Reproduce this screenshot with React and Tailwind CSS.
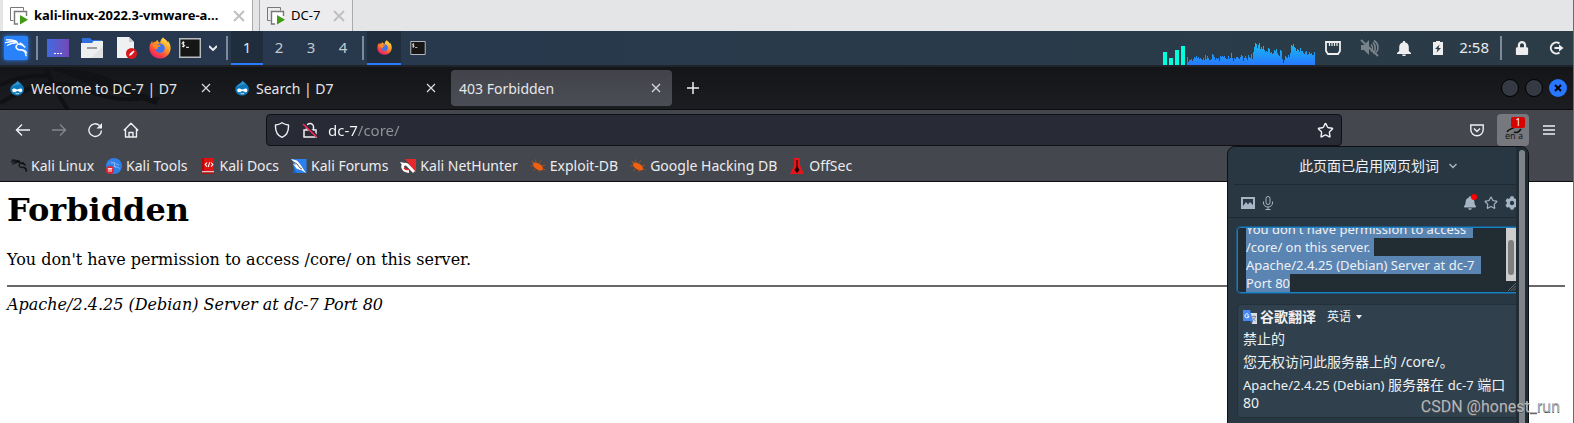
import { useEffect, useRef } from "react";
import { SiKalilinux } from "react-icons/si";
import { FaBell, FaCog, FaLock } from "react-icons/fa";
import { Star } from "lucide-react";

const SELECTED_TEXT =
  "Forbidden\nYou don't have permission to access /core/ on this server.\nApache/2.4.25 (Debian) Server at dc-7 Port 80";

// one value per pixel column of the cpu graph
const CPU_LOAD = [
  8, 3, 5, 5, 6, 4, 6, 8, 7, 9, 7, 8, 6, 7, 6, 5, 7, 5, 10, 6, 9, 7, 5, 5, 6, 11, 10, 8, 5, 7, 6, 7,
  4, 9, 8, 9, 8, 9, 7, 6, 6, 9, 6, 7, 12, 7, 4, 7, 6, 8, 8, 7, 6, 8, 10, 9, 4, 7, 9, 7, 5, 10, 8, 7,
  11, 6, 13, 18, 22, 21, 17, 20, 22, 16, 18, 16, 19, 15, 13, 14, 13, 17, 16, 12, 13, 11, 12, 15, 14, 16,
  12, 10, 9, 15, 14, 6, 2, 5, 9, 8, 7, 10, 8, 12, 20, 19, 21, 18, 17, 14, 16, 15, 13, 17, 14, 14, 12,
  11, 13, 14, 10, 11, 13, 11, 12, 10, 10, 13,
];

const bookmarks = [
  ["Kali Linux", KaliMark],
  ["Kali Tools", ToolsMark],
  ["Kali Docs", DocsMark],
  ["Kali Forums", ForumsMark],
  ["Kali NetHunter", NetHunterMark],
  ["Exploit-DB", BugMark],
  ["Google Hacking DB", BugMark],
  ["OffSec", OffSecMark],
];

function KaliMark() {
  return <SiKalilinux className="size-4 stroke-[#0c0d0f] stroke-1 text-[#0c0d0f]" />;
}

function ToolsMark() {
  return (
    <span className="relative flex size-4 items-center justify-center rounded-full bg-[#2f7fe8]">
      <SiKalilinux className="size-3 text-white" />
      <svg viewBox="0 0 8 8" className="absolute bottom-0 left-0 size-2">
        <circle cx="4" cy="4" r="4" fill="#e3262b" />
        <path d="M1.8 2.7h4.4M3 2.700v3.200M5 2.700v3.200" stroke="#fff" strokeWidth="1" />
      </svg>
    </span>
  );
}

function DocsMark() {
  return (
    <svg viewBox="0 0 16 16" className="size-4">
      <path d="M2 0h12v13H2z" fill="#e01212" />
      <path d="M2 0h2v13H2z" fill="#a80c0c" />
      <path d="M2 13h12v1.500H2z" fill="#d9c9c9" />
      <path d="M2 14.500h12V16H2z" fill="#b40e0e" />
      <path d="M7 4.500 5.200 6.600 7 8.600M11 4.500l1.800 2L11 8.600M9.800 4.200 8.200 9" stroke="#fff" strokeWidth="1.100" fill="none" />
    </svg>
  );
}

function ForumsMark() {
  return (
    <svg viewBox="0 0 16 16" className="size-4">
      <path d="M1 1h14.500v14H4z" fill="#2a80ee" />
      <path d="M0 1 6 2.500 9 6l2 3 4 6-5-3-4-1-4-5 3 1z" fill="#fff" />
      <path d="M1 3l5 3 3 4 2 1" stroke="#222" strokeWidth=".7" fill="none" />
      <path d="m3 10 3 5H2z" fill="#1767cf" />
    </svg>
  );
}

function NetHunterMark() {
  return (
    <svg viewBox="0 0 16 16" className="size-4">
      <path d="M5 1h11v14z" fill="#e6282c" />
      <path d="M14 14 8 7.500C5.500 4.500 1.500 7 3 10c1 2.500 3.500 3.500 6 3.500" stroke="#fff" strokeWidth="2.800" fill="none" />
      <path d="M4 10c1.500 2 3 2 5 1.500" stroke="#e6282c" strokeWidth="1.300" fill="none" />
      <path d="m0 4 5 1-3 2z" fill="#fff" />
    </svg>
  );
}

function BugMark() {
  return (
    <svg viewBox="0 0 16 16" className="size-4">
      <g stroke="#b5521c" strokeWidth=".8" fill="none">
        <path d="M4 5 1.500 3M6 4 5.500 1.500M9 5l2-2.500M3 8H.5M5 11l-1.500 2M9 12v2M12 8l3-1M13 11l2.500 1M4 4 2 5" />
      </g>
      <ellipse cx="8" cy="8.500" rx="5.600" ry="3" transform="rotate(32 8 8.500)" fill="#f0600f" />
    </svg>
  );
}

function OffSecMark() {
  return (
    <svg viewBox="0 0 16 16" className="size-4">
      <path d="M5 0h6v7l4 9H1l4-9z" fill="#e3161b" />
      <path d="M8 2v9" stroke="#5a0709" strokeWidth="1.500" />
      <path d="m8 8 2.500 4L8 15l-2.500-3z" fill="#1d0607" />
    </svg>
  );
}

function DrupalMark() {
  return (
    <svg viewBox="0 0 16 16" className="size-4 shrink-0">
      <path d="M8.500.5c.6 1.700 2 2.200 3.400 3.300 1.900 1.400 3 3.200 3 5.400 0 3.700-3 6.300-6.800 6.300S1.300 12.700 1.300 9.200c0-3.500 2.700-4.700 4.500-5.800C7.200 2.600 8.300 1.800 8.500.5z" fill="#0d77b8" />
      <path d="M8.500.5c.6 1.700 2 2.200 3.400 3.300C9.500 5 5.500 5 3 7c.6-2 2-2.900 3.200-3.600C7.300 2.700 8.300 1.800 8.500.5z" fill="#2f93cf" />
      <path d="M4.500 8.600c1.700-.6 3 .9 3.900.9 1 0 2.300-1.300 3.700-.9 1.700.5 1.500 3.400 0 3.600-1.400.2-2.300-1.200-3.600-1.200-1.200 0-2.200 1.500-3.700 1.300C2.700 12 2.800 9.200 4.500 8.600z" fill="#fff" />
      <path d="M6.500 13.200c1.200.8 2.600.8 3.800 0" stroke="#fff" strokeWidth=".9" fill="none" />
    </svg>
  );
}

function FirefoxMark({ className }) {
  return (
    <svg viewBox="0 0 24 24" className={className}>
      <defs>
        <linearGradient id="fox" x1=".85" y1="0" x2=".2" y2="1">
          <stop offset="0" stopColor="#fff14f" />
          <stop offset=".4" stopColor="#ff9a2a" />
          <stop offset=".75" stopColor="#fb4040" />
          <stop offset="1" stopColor="#e31580" />
        </linearGradient>
      </defs>
      <path d="M15.500.5c1.500 2 4 3 5.400 5.600.1-.8-.1-1.500-.3-2.100 2 2.300 3 5.200 3 8.300 0 6.300-5.200 11.200-11.600 11.200S.5 18.500.5 12.300C.5 8.700 2 6.200 3.600 4.300c0 1 .2 1.700.5 2.300C5 5.500 6.300 5 7.300 5.100 8.500 3.800 9 3.300 9.200 3c.3 1.700 1.400 3 3 3.300C12.300 4 13.500 1.700 15.500.5z" fill="url(#fox)" />
      <circle cx="12" cy="12.200" r="5.200" fill="#3f73ee" />
      <path d="M4.500 8.500C7 7.500 9.500 8.500 13 9c-.5 1.200-2 1.500-3 1.900-.7.300-.5 1.600-.9 2.700-2.500-.6-4.200-2.500-4.600-5.100z" fill="#ff8b1f" />
    </svg>
  );
}

function TerminalMark({ className }) {
  return (
    <svg viewBox="0 0 22 20" className={className}>
      <path d="M.7.7h20.600v18.600H.7z" fill="#161616" stroke="#b9bcbe" strokeWidth="1.400" />
      <path d="M5.500 4.500C4.500 4 3 4.300 3 5.300c0 1.300 2.700.8 2.700 2.200C5.700 8.700 4 8.800 3 8.200M4.300 3.300v6M7 9.300h3" stroke="#fff" fill="none" />
    </svg>
  );
}

function VmTab({ label, active }) {
  return (
    <div className={`flex items-center border-r border-[#a9abad] pr-[7px] pl-[7px] ${active ? "w-[250px] bg-white font-bold" : "ml-[6px] w-[94px] border-l bg-[#ececee] pl-[5px]"}`}>
      <svg viewBox="0 0 18 18" className="size-[18px] shrink-0">
        <path d="M3.500 13.500h-3V.5h13v3" fill="none" stroke="#777" />
        <path d="M8 17H4.500V4.500h12V9" fill="#fff" stroke="#777" strokeWidth="1.400" />
        <path d="m10 8 8 4.700L10 17.500z" fill="#3f9c12" />
      </svg>
      <button className="ml-1.5 text-[13px] whitespace-nowrap text-black">{label}</button>
      <button aria-label={`Close ${label}`} className="ml-auto">
        <svg viewBox="0 0 12 12" className="size-3 stroke-[#c0c0c0] stroke-2">
          <path d="m1 1 10 10M11 1 1 11" />
        </svg>
      </button>
    </div>
  );
}

function Divider({ className }) {
  return <span className={`h-6 w-0.5 shrink-0 bg-[#7f8a99] ${className}`} />;
}

function CpuGraph() {
  return (
    <div className="flex h-full items-end gap-0.5">
      <div className="flex items-end gap-0.5">
        <i className="h-[13px] w-1 bg-[#0fd]" />
        <i className="h-[7px] w-1 bg-[#0fd]" />
        <i className="h-[15px] w-1 bg-[#0fd]" />
        <i className="h-[19px] w-1 bg-[#0fd]" />
      </div>
      <svg viewBox="0 0 128 24" className="h-6 w-32" shapeRendering="crispEdges">
        <defs>
          <linearGradient id="load" x1="0" y1="0" x2="0" y2="24" gradientUnits="userSpaceOnUse">
            <stop offset="0" stopColor="#13c4ee" />
            <stop offset="1" stopColor="#2878ff" />
          </linearGradient>
        </defs>
        <path fill="url(#load)" d={"M0 24" + CPU_LOAD.map((v, i) => `V${24 - v}H${i + 1}`).join("") + "V24z"} />
      </svg>
    </div>
  );
}

function DesktopPanel() {
  return (
    <header className="flex h-[34px] items-center bg-linear-to-r from-[#27374f] to-[#2b3c47] text-[#e8eaed]">
      <button aria-label="Applications" className="ml-1 flex size-6 shrink-0 items-center justify-center rounded-xs bg-[#2a82fb] shadow-[0_0_4px_#2a82fb]">
        <SiKalilinux className="size-[22px] stroke-white stroke-1 text-white" />
      </button>
      <Divider className="ml-2" />
      <div className="ml-[9px] flex items-center gap-3">
        <button aria-label="Show desktop" className="flex h-[18px] w-[22px] items-end justify-center gap-px bg-linear-to-r from-[#3d6ae0] to-[#7048b8] pb-[3px]">
          <i className="h-px w-0.5 bg-white" />
          <i className="h-px w-0.5 bg-white" />
          <i className="h-px w-0.5 bg-white" />
        </button>
        <button aria-label="Files">
          <svg viewBox="0 0 22 20" className="h-5 w-[22px]">
            <path d="M1 0h8l2 2h10v6H1z" fill="#2e6fdc" />
            <path d="M0 5h11l1.500-2H22v17H0z" fill="#eceef0" />
            <path d="M22 8v12H10z" fill="#dfe1e3" />
            <path d="M6 10h10" stroke="#9b9b9b" strokeWidth="2" />
          </svg>
        </button>
        <button aria-label="Text editor">
          <svg viewBox="0 0 22 22" className="size-[22px]">
            <path d="M2 0h12l5 5v16H2z" fill="#eff0f1" />
            <path d="m14 0 5 5h-5z" fill="#c9cbcd" />
            <circle cx="16.500" cy="16.500" r="5.500" fill="#d9181d" />
            <path d="m14 19 1-2.500 3.500-3 1 1-3 3.500z" fill="#fff" />
          </svg>
        </button>
        <button aria-label="Firefox">
          <FirefoxMark className="size-[22px]" />
        </button>
      </div>
      <button aria-label="Terminal" className="ml-2">
        <TerminalMark className="h-5 w-[22px]" />
      </button>
      <button aria-label="More terminals" className="ml-2">
        <svg viewBox="0 0 8 6" className="h-1.5 w-2 fill-none stroke-[#e8eaed] stroke-2">
          <path d="m0 1 4 4 4-4" />
        </svg>
      </button>
      <Divider className="mr-[3px] ml-[9px]" />
      {[1, 2, 3, 4].map((n) => (
        <button
          key={n}
          className={`h-full w-8 text-[15px] ${n === 1 ? "border-b-2 border-[#2b7bff] bg-[#1f2d3d] text-[#dfe3e8]" : "pb-0.5 text-[#c4cad2]"}`}
        >
          {n}
        </button>
      ))}
      <Divider className="mr-[3px] ml-[3px]" />
      <button aria-label="403 Forbidden window" className="flex h-full w-[34px] items-center justify-center border-b-2 border-[#2b7bff] bg-[#1f2d3d]">
        <FirefoxMark className="size-[15px]" />
      </button>
      <button aria-label="Terminal window" className="ml-[9px]">
        <TerminalMark className="h-3.5 w-4" />
      </button>

      <div className="ml-auto flex h-full items-center">
        <CpuGraph />
        <svg viewBox="0 0 16 14" className="ml-2.5 h-3.5 w-4">
          <path d="M1 1h14v9l-2 3H3l-2-3z" fill="none" stroke="#eee" strokeWidth="1.800" />
          <path d="M4.500 1v4M7 1v4M9.500 1v4M12 1v4" stroke="#eee" strokeWidth="1.200" />
        </svg>
        <svg viewBox="0 0 20 18" className="ml-[19px] h-[18px] w-5 opacity-40">
          <path d="M1 6h3l5-5v15l-5-5H1z" fill="#eee" />
          <path d="M11 5.500c2 2 2 5 0 7M13 3.500c3 3 3 8 0 11M14 1.500c5 3.500 5 9 2 12" fill="none" stroke="#eee" strokeWidth="1.600" />
          <path d="m1 1 17 16" stroke="#eee" strokeWidth="1.800" />
        </svg>
        <svg viewBox="0 0 14 15" className="ml-[17px] h-[15px] w-3.5 fill-[#eee]">
          <path d="M6 0h2v1.300c2.600.6 3.800 2.500 3.800 5V10L14 12v1H0v-1l2.200-2V6.300c0-2.500 1.200-4.400 3.800-5zM5 13.500h4L8.300 15H5.700z" />
        </svg>
        <svg viewBox="0 0 10 14" className="ml-[22px] h-3.5 w-2.5">
          <path d="M0 1h3V0h4v1h3v13H0z" fill="#eee" />
          <path d="M6.500 3.500 2 8h2.500L3.500 11.500 8 7H5.500z" fill="#2b3b47" />
        </svg>
        <time className="ml-4 pb-0.5 text-[15px]">2:58</time>
        <Divider className="ml-[11px]" />
        <button aria-label="Lock screen" className="ml-[13px]">
          <FaLock className="h-3.5 w-3.5 text-[#eee]" />
        </button>
        <button aria-label="Log out" className="mr-[9px] ml-5">
          <svg viewBox="0 0 15 14" className="h-3.5 w-[15px] fill-none stroke-[#eee] stroke-2">
            <path d="M10.500 2.500a5.500 5.500 0 1 0 0 9" />
            <path d="M5.500 7H11" />
            <path d="m10 3.500 4.500 3.500-4.500 3.500z" fill="#eee" stroke="none" />
          </svg>
        </button>
      </div>
    </header>
  );
}

function BrowserTab({ title, active }) {
  return (
    <div className={`flex h-9 w-[221px] items-center rounded-sm pr-[11px] pl-2 ${active ? "bg-linear-to-b from-[#42434a] to-[#4b4d56]" : ""}`}>
      {!active && (
        <span className="mr-1.5 flex">
          <DrupalMark />
        </span>
      )}
      <button className="truncate pt-0.5 text-sm">{title}</button>
      <button aria-label={`Close ${title}`} className="ml-auto">
        <svg viewBox="0 0 10 10" className="size-2.5 stroke-[#dcdcde]">
          <path d="m1 1 8 8M9 1 1 9" strokeWidth="1.200" />
        </svg>
      </button>
    </div>
  );
}

function TabStrip() {
  return (
    <div className="relative isolate flex h-[43px] items-center gap-1 overflow-hidden border-b border-[#0c0c0d] bg-linear-to-b from-[#141518] to-[#1c1d21] pr-1.5 pl-px text-[#e6e6e8]">
      {/* faint dragon of the wallpaper behind the strip */}
      <svg viewBox="0 0 180 43" className="absolute top-0 left-0 -z-10 h-[43px] w-[180px] fill-none stroke-[#101114] stroke-[4]">
        <path d="M0 18C18 10 32 8 50 9M0 36C30 18 55 12 78 20c18 6 30 14 62 12M46 2c6 14 12 26 22 41" />
        <path d="M52 2c50 0 62 12 84 22 10 4 16 6 24 6l-4 8-22-8c-20-2-30-10-42-16l4 8-12-8z" className="fill-[#111215] stroke-none" />
      </svg>
      <BrowserTab title="Welcome to DC-7 | D7" />
      <BrowserTab title="Search | D7" />
      <BrowserTab title="403 Forbidden" active />
      <button aria-label="New tab" className="ml-[11px]">
        <svg viewBox="0 0 12 12" className="size-3 stroke-[#f0f0f0]">
          <path d="M6 0v12M0 6h12" strokeWidth="1.500" />
        </svg>
      </button>
      <div className="ml-auto flex gap-1.5">
        <button aria-label="Minimize" className="size-[18px] rounded-full border border-black bg-[#353944]" />
        <button aria-label="Maximize" className="size-[18px] rounded-full border border-black bg-[#353944]" />
        <button aria-label="Close window" className="flex size-[18px] items-center justify-center rounded-full bg-[#2777ff]">
          <svg viewBox="0 0 8 8" className="size-2 stroke-black stroke-2">
            <path d="m1 1 6 6M7 1 1 7" />
          </svg>
        </button>
      </div>
    </div>
  );
}

function NavBar() {
  return (
    <div className="flex h-[38px] items-center pt-0.5 text-[#f0f0f2]">
      <div className="flex w-[266px] shrink-0 items-center gap-5 pl-[15px]">
        <button aria-label="Back">
          <svg viewBox="0 0 16 16" className="size-4 fill-none stroke-current">
            <path d="M15 8H1.500M7 2.500 1.500 8 7 13.500" strokeWidth="1.400" />
          </svg>
        </button>
        <button aria-label="Forward" className="text-[#85868b]">
          <svg viewBox="0 0 16 16" className="size-4 fill-none stroke-current">
            <path d="M1 8h13.500M9 2.500 14.500 8 9 13.500" strokeWidth="1.400" />
          </svg>
        </button>
        <button aria-label="Reload">
          <svg viewBox="0 0 16 16" className="size-4 fill-none stroke-current">
            <path d="M12.500 3.500a6.300 6.300 0 1 0 2 5" strokeWidth="1.400" />
            <path d="M15 1v5.500H9.500z" fill="currentColor" stroke="none" />
          </svg>
        </button>
        <button aria-label="Home">
          <svg viewBox="0 0 16 16" className="size-4 fill-none stroke-current">
            <path d="M.8 8.500 8 1.300l7.200 7.200M2.500 7v8h11V7M6 15v-4.500h4V15" strokeWidth="1.400" strokeLinejoin="round" />
          </svg>
        </button>
      </div>
      <div className="flex h-8 flex-1 items-center rounded-sm border border-[#101114] bg-[#282a36] px-[7px]">
        <svg viewBox="0 0 16 16" className="size-4 shrink-0 fill-none stroke-current">
          <path d="M8 .8c2 1.400 4 2 6.500 2.200C14.800 9 12.500 13.500 8 15.300 3.500 13.500 1.200 9 1.500 3 4 2.800 6 2.200 8 .8z" strokeWidth="1.400" strokeLinejoin="round" />
        </svg>
        <svg viewBox="0 0 16 16" className="ml-3 size-4 shrink-0 fill-none">
          <path d="M2 8h12v7H2zM4.500 8V5a3.500 3.500 0 0 1 7 0v3" stroke="currentColor" strokeWidth="1.500" />
          <path d="m1.500 1.500 13.500 13" stroke="#282a36" strokeWidth="3" />
          <path d="m1 2 13.500 13" stroke="#ff2b58" strokeWidth="1.600" />
        </svg>
        {/* host is brighter than the path */}
        <input
          aria-label="Address"
          defaultValue="dc-7/core/"
          className="ml-2.5 min-w-0 flex-1 bg-transparent bg-linear-to-r from-[#fbfbfe] from-[30px] to-[#94959c] to-[30px] bg-clip-text text-[15px] text-transparent outline-none"
        />
        <button aria-label="Bookmark this page">
          <Star className="size-[17px]" strokeWidth={2} />
        </button>
      </div>
      <div className="flex w-[231px] shrink-0 items-center justify-end pr-[18px]">
        <button aria-label="Save to Pocket">
          <svg viewBox="0 0 14 13" className="h-[13px] w-3.5 fill-none stroke-current">
            <path d="M.8 1h12.400v4.500a6.200 6.200 0 0 1-12.400 0z" strokeWidth="1.400" />
            <path d="m4 4.500 3 3 3-3" strokeWidth="1.400" />
          </svg>
        </button>
        <button aria-label="Translate, 1 notice" className="relative ml-[13px] size-8 rounded-sm bg-[#77787d]">
          <svg viewBox="0 0 32 32" className="size-8 fill-none stroke-[#151515]">
            <path d="M10 18c2-4 7-3 10-6M17 18c2 1 5 0 7-3" strokeWidth="1.500" />
          </svg>
          <span className="absolute bottom-1.5 left-2 text-[9px] leading-[9px] text-[#151515]">en a</span>
          <span className="absolute top-[3px] right-1 h-[11px] w-3.5 rounded-xs bg-[#d70002] text-[10px] leading-[11px] text-white">1</span>
        </button>
        <button aria-label="Menu" className="ml-3.5">
          <svg viewBox="0 0 12 10" className="h-2.5 w-3 stroke-current">
            <path d="M0 1h12M0 5h12M0 9h12" strokeWidth="1.400" />
          </svg>
        </button>
      </div>
    </div>
  );
}

function TranslatePopup() {
  const box = useRef(null);

  useEffect(() => {
    const el = box.current;
    el.focus({ preventScroll: true });
    el.select();
    el.scrollTop = el.scrollHeight;
  }, []);

  return (
    <aside className="absolute top-[36px] right-[44px] z-10 flex h-[420px] w-[302px] rounded-t-lg border border-[#0d1114] bg-[#293742] font-['Noto_Sans','Noto_Sans_CJK_SC',sans-serif] text-sm text-[#eef1f3]">
      <div className="min-w-0 flex-1 overflow-hidden">
        <div className="ml-1.5 flex h-[38px] items-center justify-center border-b border-[#1f2b33] pl-1.5">
          <button className="flex items-center gap-2.5">
            此页面已启用网页划词
            <svg viewBox="0 0 8 6" className="h-1.5 w-2 fill-none stroke-[#a9b6c2] stroke-[1.5]">
              <path d="m.5 1 3.500 3.500L7.500 1" />
            </svg>
          </button>
        </div>
        <div className="flex h-[33px] items-center border-b border-[#1f2b33] pt-1 pl-[13px] text-[#a6b5c3]">
          <button aria-label="Image">
            <svg viewBox="0 0 14 12" className="h-3 w-3.5">
              <path d="M0 0h14v12H0zM2 2v7l3-4 2 2.500L9 5l3 3V2z" fill="currentColor" fillRule="evenodd" />
            </svg>
          </button>
          <button aria-label="Voice" className="ml-2">
            <svg viewBox="0 0 10 14" className="h-3.5 w-2.5 fill-none stroke-current">
              <rect x="3" y=".5" width="4" height="8" rx="2" />
              <path d="M.5 5.500V7a4.500 4 0 0 0 9 0V5.500M5 11v2.500M2.500 13.500h5" />
            </svg>
          </button>
          <button aria-label="Notifications" className="relative mr-[7px] ml-auto">
            <FaBell className="size-3.5" />
            <i className="absolute -top-0.5 right-0 size-1.5 rounded-full bg-[#ff0000]" />
          </button>
          <button aria-label="Favourites" className="mr-[7px]">
            <Star className="size-3.5" strokeWidth={2} />
          </button>
          <button aria-label="Settings" className="-mr-[3px]">
            <FaCog className="size-3.5" />
          </button>
        </div>
        <div className="relative mt-[9px] -mr-1 ml-[9px] h-[66px]">
          <textarea
            ref={box}
            aria-label="Text to translate"
            defaultValue={SELECTED_TEXT}
            className="block h-full w-full resize-none rounded-sm border border-[#1b7fc4] bg-[#222c33] pr-5 pl-2 text-[13px] leading-[18px] shadow-[0_0_0_1px_#1c5a83] outline-none [scrollbar-width:none] selection:bg-[#5a85b3] selection:text-[#eef1f3]"
          />
          <span className="absolute top-px right-1 flex h-[53px] w-2.5 justify-center bg-[#cdcdcd]">
            <i className="mt-3 h-[35px] w-1.5 rounded-full bg-[#7f7f7f]" />
          </span>
          <svg viewBox="0 0 9 9" className="absolute right-1 bottom-0.5 size-2 stroke-[#6a7379]">
            <path d="M0 9 9 0M3 9l6-6M6 9l3-3" />
          </svg>
        </div>
        <section className="mt-[11px] -mr-1 ml-[9px] rounded-sm border border-[#22303a] bg-[#30404d] pt-[3px] pr-3 pb-[5px] pl-[5px] leading-[18px]">
          <div className="flex items-center">
            <svg viewBox="0 0 14 14" className="size-3.5">
              <path d="M6 3h8v11H9z" fill="#d9dde1" />
              <path d="M0 0h7l3 11H0z" fill="#4788f4" />
              <path d="m7 11 3 0-1.500 3z" fill="#2f62c4" />
              <path d="M5.500 4.500a2 2 0 1 0 .5 1.500H4.200" fill="none" stroke="#fff" />
              <path d="M9 6.500h4M11 5.500v1M12.500 6.500c-.5 2-1.500 3-3 4M9.700 7.500c.5 1.500 1.500 2.500 3 3.500" fill="none" stroke="#6c7a86" strokeWidth=".8" />
            </svg>
            <h2 className="ml-[3px] font-bold">谷歌翻译</h2>
            <select aria-label="Source language" className="ml-[11px] appearance-none bg-transparent text-xs leading-[18px] outline-none">
              <option>英语</option>
            </select>
            <svg viewBox="0 0 6 4" className="ml-1 h-1 w-1.5 fill-current">
              <path d="M0 0h6L3 4z" />
            </svg>
          </div>
          <p className="mt-1">禁止的</p>
          <p className="mt-[5px]">您无权访问此服务器上的 /core/。</p>
          <p className="mt-[5px]">
            <span className="text-[13px]">Apache/2.4.25 (Debian)</span> 服务器在 <span className="text-[13px]">dc-7</span> 端口 80
          </p>
        </section>
      </div>
      <div className="flex w-3 justify-center rounded-tr-lg bg-[#212c34] pt-[3px]">
        <i className="h-full w-1.5 rounded-full bg-[#7f848b]" />
      </div>
    </aside>
  );
}

export default function App() {
  return (
    <div className="flex h-screen flex-col overflow-hidden border-r border-[#6b6b6b] bg-white font-['Noto_Sans',sans-serif]">
      <div className="flex h-[31px] shrink-0 bg-[#e4e5e6] pl-[3px]">
        <VmTab label="kali-linux-2022.3-vmware-a..." active />
        <VmTab label="DC-7" />
      </div>
      <DesktopPanel />
      <div className="h-0.5 shrink-0 bg-[#202329]" />
      <TabStrip />
      <div className="relative h-[72px] shrink-0 border-b border-[#0c0c0d] bg-[#45474e]">
        <NavBar />
        <nav className="flex items-center gap-3 pt-[7px] pl-[11px] text-sm leading-[22px] text-[#ececee]">
          {bookmarks.map(([label, Mark]) => (
            <a key={label} href="#" className="flex items-center gap-1 whitespace-nowrap">
              <Mark />
              {label}
            </a>
          ))}
        </nav>
        <TranslatePopup />
      </div>
      <main className="flex-1 pt-[9px] pr-2 pl-[7px] font-['DejaVu_Serif',serif] text-base text-black">
        <h1 className="text-[32px] leading-[38px] font-bold">Forbidden</h1>
        <p className="mt-[21px] leading-[19px]">You don't have permission to access /core/ on this server.</p>
        <hr className="mt-4 border-t-2 border-[#6a6868]" />
        <address className="mt-2 leading-[19px] italic">Apache/2.4.25 (Debian) Server at dc-7 Port 80</address>
      </main>
      <p className="absolute right-[14px] bottom-1 z-20 font-['Roboto',sans-serif] text-base text-[#b4b6b8] text-shadow-2xs text-shadow-[#555]">
        CSDN @honest_run
      </p>
    </div>
  );
}
